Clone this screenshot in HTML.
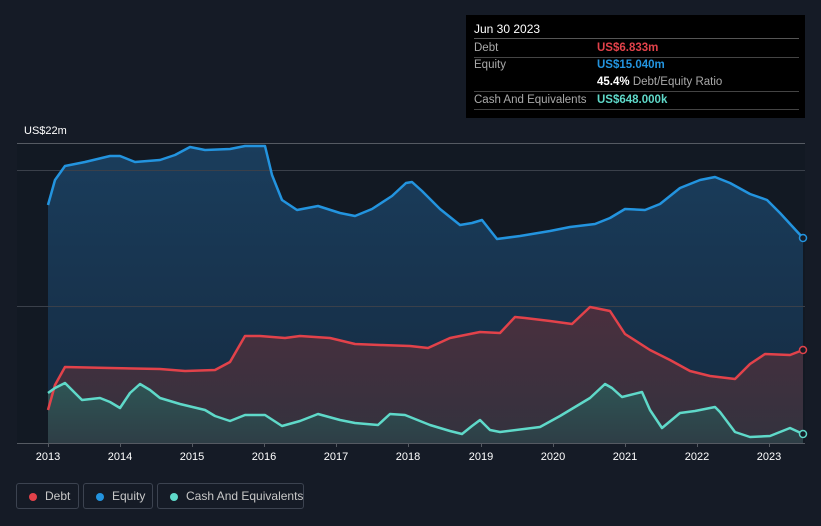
<!DOCTYPE html>
<html><head><meta charset="utf-8"><style>
body{margin:0;background:#151b26;width:821px;height:526px;overflow:hidden;font-family:"Liberation Sans",sans-serif;position:relative}
.tt{position:absolute;left:466px;top:15px;width:339px;height:103px;background:#000;color:#fff;font-size:11.5px}
.tt .r{position:absolute;left:8px;width:325px;border-bottom:1px solid #444;height:17px;line-height:17px;white-space:nowrap}
.tt span.l{color:#a9a9a9}
.tt span.v{position:absolute;left:123px;font-weight:bold}
.leg{position:absolute;top:483px;height:26px;border:1px solid #3c4350;border-radius:3px;color:#c8c8c8;font-size:12px;line-height:25px;box-sizing:border-box;white-space:nowrap}
.leg i{position:absolute;top:9px;width:8px;height:8px;border-radius:50%}
.ax{position:absolute;color:#fff;font-size:11px}
</style></head><body>
<div class="tt">
<div class="r" style="top:6px;border-color:#555;color:#fff;font-size:12px">Jun 30 2023</div>
<div class="r" style="top:25px"><span class="l">Debt</span><span class="v" style="color:#e2424a">US$6.833m</span></div>
<div class="r" style="top:42px;border:none"><span class="l">Equity</span><span class="v" style="color:#2394df">US$15.040m</span></div>
<div class="r" style="top:59px"><span class="v" style="color:#fff">45.4% <span style="color:#a9a9a9;font-weight:normal">Debt/Equity Ratio</span></span></div>
<div class="r" style="top:77px"><span class="l">Cash And Equivalents</span><span class="v" style="color:#5fd9c9">US$648.000k</span></div>
</div>
<div class="ax" style="left:24px;top:125px">US$22m</div>
<div class="ax" style="left:24px;top:424px">US$0</div>
<svg width="821" height="526" style="position:absolute;left:0;top:0">
<defs>
<linearGradient id="ge" x1="0" y1="0" x2="0" y2="1"><stop offset="0" stop-color="#1a3d5c"/><stop offset="1" stop-color="#152a40"/></linearGradient>
<linearGradient id="gd" x1="0" y1="0" x2="0" y2="1"><stop offset="0" stop-color="#4a2f3e"/><stop offset="1" stop-color="#33323e"/></linearGradient>
<linearGradient id="gc" x1="0" y1="0" x2="0" y2="1"><stop offset="0" stop-color="#2e5555"/><stop offset="1" stop-color="#2e3e46"/></linearGradient>
</defs>
<rect x="17" y="143" width="788" height="300" fill="#121923"/>
<path d="M48,205 L55,180 L65,166 L85,162 L110,156 L120,156 L135,162 L160,160 L175,155 L190,147 L205,150 L230,149 L245,146 L265,146 L272,175 L282,200 L297,210 L318,206 L340,213 L355,216 L372,209 L392,196 L406,183 L412,182 L422,191 L440,209 L460,225 L472,223 L482,220 L497,239 L520,236 L550,231 L570,227 L595,224 L610,218 L625,209 L645,210 L660,204 L680,188 L700,180 L715,177 L730,183 L750,194 L767,200 L780,213 L803,238 L803,443 L48,443Z" fill="url(#ge)"/>
<path d="M48,410 L55,385 L65,367 L110,368 L160,369 L185,371 L215,370 L230,362 L245,336 L260,336 L285,338 L300,336 L330,338 L355,344 L380,345 L410,346 L428,348 L450,338 L480,332 L500,333 L515,317 L525,318 L550,321 L572,324 L590,307 L610,311 L625,334 L650,350 L670,360 L690,371 L710,376 L735,379 L750,364 L765,354 L790,355 L803,350 L803,443 L48,443Z" fill="url(#gd)"/>
<path d="M48,393 L55,388 L65,383 L72,390 L82,400 L100,398 L110,402 L120,408 L130,393 L140,384 L150,390 L160,398 L180,404 L205,410 L215,416 L230,421 L245,415 L265,415 L282,426 L300,421 L318,414 L340,420 L355,423 L378,425 L390,414 L405,415 L430,425 L450,431 L462,434 L472,426 L480,420 L490,430 L500,432 L540,427 L560,416 L590,398 L605,384 L612,388 L622,397 L642,392 L650,410 L662,428 L680,413 L695,411 L715,407 L720,412 L735,432 L750,437 L770,436 L790,428 L803,434 L803,443 L48,443Z" fill="url(#gc)"/>
<g stroke="#3a404a" stroke-width="1"><line x1="17" y1="143.5" x2="805" y2="143.5" stroke="#555a62"/><line x1="17" y1="170.5" x2="805" y2="170.5"/><line x1="17" y1="306.5" x2="805" y2="306.5"/><line x1="17" y1="443.5" x2="805" y2="443.5" stroke="#555a62"/></g>
<g fill="none" stroke-width="2.5" stroke-linejoin="round">
<path d="M48,205 L55,180 L65,166 L85,162 L110,156 L120,156 L135,162 L160,160 L175,155 L190,147 L205,150 L230,149 L245,146 L265,146 L272,175 L282,200 L297,210 L318,206 L340,213 L355,216 L372,209 L392,196 L406,183 L412,182 L422,191 L440,209 L460,225 L472,223 L482,220 L497,239 L520,236 L550,231 L570,227 L595,224 L610,218 L625,209 L645,210 L660,204 L680,188 L700,180 L715,177 L730,183 L750,194 L767,200 L780,213 L803,238" stroke="#2394df"/>
<path d="M48,410 L55,385 L65,367 L110,368 L160,369 L185,371 L215,370 L230,362 L245,336 L260,336 L285,338 L300,336 L330,338 L355,344 L380,345 L410,346 L428,348 L450,338 L480,332 L500,333 L515,317 L525,318 L550,321 L572,324 L590,307 L610,311 L625,334 L650,350 L670,360 L690,371 L710,376 L735,379 L750,364 L765,354 L790,355 L803,350" stroke="#e2424a"/>
<path d="M48,393 L55,388 L65,383 L72,390 L82,400 L100,398 L110,402 L120,408 L130,393 L140,384 L150,390 L160,398 L180,404 L205,410 L215,416 L230,421 L245,415 L265,415 L282,426 L300,421 L318,414 L340,420 L355,423 L378,425 L390,414 L405,415 L430,425 L450,431 L462,434 L472,426 L480,420 L490,430 L500,432 L540,427 L560,416 L590,398 L605,384 L612,388 L622,397 L642,392 L650,410 L662,428 L680,413 L695,411 L715,407 L720,412 L735,432 L750,437 L770,436 L790,428 L803,434" stroke="#5fd9c9"/>
</g>
<circle cx="803" cy="238" r="3.5" fill="#151b26" stroke="#2394df" stroke-width="1.5"/>
<circle cx="803" cy="350" r="3.5" fill="#151b26" stroke="#e2424a" stroke-width="1.5"/>
<circle cx="803" cy="434" r="3.5" fill="#151b26" stroke="#5fd9c9" stroke-width="1.5"/>
<g stroke="#555a62"><line x1="48.5" y1="443" x2="48.5" y2="447"/><line x1="120.5" y1="443" x2="120.5" y2="447"/><line x1="192.5" y1="443" x2="192.5" y2="447"/><line x1="264.5" y1="443" x2="264.5" y2="447"/><line x1="336.5" y1="443" x2="336.5" y2="447"/><line x1="408.5" y1="443" x2="408.5" y2="447"/><line x1="481.5" y1="443" x2="481.5" y2="447"/><line x1="553.5" y1="443" x2="553.5" y2="447"/><line x1="625.5" y1="443" x2="625.5" y2="447"/><line x1="697.5" y1="443" x2="697.5" y2="447"/><line x1="769.5" y1="443" x2="769.5" y2="447"/></g>
<g fill="#fff" font-size="11" text-anchor="middle" font-family="Liberation Sans"><text x="48" y="460">2013</text><text x="120" y="460">2014</text><text x="192" y="460">2015</text><text x="264" y="460">2016</text><text x="336" y="460">2017</text><text x="408" y="460">2018</text><text x="481" y="460">2019</text><text x="553" y="460">2020</text><text x="625" y="460">2021</text><text x="697" y="460">2022</text><text x="769" y="460">2023</text></g>
</svg>
<div class="leg" style="left:16px;width:63px"><i style="left:12px;background:#e2424a"></i><span style="position:absolute;left:28px">Debt</span></div>
<div class="leg" style="left:83px;width:70px"><i style="left:12px;background:#2394df"></i><span style="position:absolute;left:28px">Equity</span></div>
<div class="leg" style="left:157px;width:147px"><i style="left:12px;background:#5fd9c9"></i><span style="position:absolute;left:28px">Cash And Equivalents</span></div>
</body></html>
